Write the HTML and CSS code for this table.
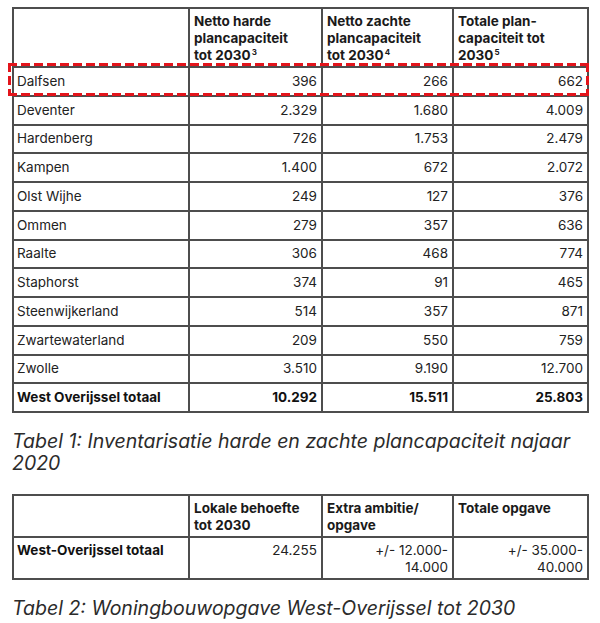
FILE: index.html
```html
<!DOCTYPE html>
<html lang="nl">
<head>
<meta charset="utf-8">
<link rel="stylesheet" href="styles.css">
</head>
<body>
<div class="page">
  <div class="table-wrap">
    <table class="data t1">
      <colgroup>
        <col class="c1"><col class="c2"><col class="c3"><col class="c4">
      </colgroup>
      <thead>
        <tr>
          <th></th>
          <th>Netto harde<br>plancapaciteit<br>tot 2030<sup>3</sup></th>
          <th>Netto zachte<br>plancapaciteit<br>tot 2030<sup>4</sup></th>
          <th>Totale plan-<br>capaciteit tot<br>2030<sup>5</sup></th>
        </tr>
      </thead>
      <tbody>
        <tr><td>Dalfsen</td><td class="n">396</td><td class="n">266</td><td class="n">662</td></tr>
        <tr><td>Deventer</td><td class="n">2.329</td><td class="n">1.680</td><td class="n">4.009</td></tr>
        <tr><td>Hardenberg</td><td class="n">726</td><td class="n">1.753</td><td class="n">2.479</td></tr>
        <tr><td>Kampen</td><td class="n">1.400</td><td class="n">672</td><td class="n">2.072</td></tr>
        <tr><td>Olst Wijhe</td><td class="n">249</td><td class="n">127</td><td class="n">376</td></tr>
        <tr><td>Ommen</td><td class="n">279</td><td class="n">357</td><td class="n">636</td></tr>
        <tr><td>Raalte</td><td class="n">306</td><td class="n">468</td><td class="n">774</td></tr>
        <tr><td>Staphorst</td><td class="n">374</td><td class="n">91</td><td class="n">465</td></tr>
        <tr><td>Steenwijkerland</td><td class="n">514</td><td class="n">357</td><td class="n">871</td></tr>
        <tr><td>Zwartewaterland</td><td class="n">209</td><td class="n">550</td><td class="n">759</td></tr>
        <tr><td>Zwolle</td><td class="n">3.510</td><td class="n">9.190</td><td class="n">12.700</td></tr>
        <tr class="total"><td>West Overijssel totaal</td><td class="n">10.292</td><td class="n">15.511</td><td class="n">25.803</td></tr>
      </tbody>
    </table>
    <div class="highlight"></div>
  </div>
  <p class="caption cap1">Tabel 1: Inventarisatie harde en zachte plancapaciteit najaar<br>2020</p>

  <table class="data t2">
    <colgroup>
      <col class="c1"><col class="c2"><col class="c3"><col class="c4">
    </colgroup>
    <thead>
      <tr>
        <th></th>
        <th>Lokale behoefte<br>tot 2030</th>
        <th>Extra ambitie/<br>opgave</th>
        <th>Totale opgave</th>
      </tr>
    </thead>
    <tbody>
      <tr>
        <td class="b">West-Overijssel totaal</td>
        <td class="n">24.255</td>
        <td class="n">+/- 12.000-<br>14.000</td>
        <td class="n">+/- 35.000-<br>40.000</td>
      </tr>
    </tbody>
  </table>
  <p class="caption cap2">Tabel 2: Woningbouwopgave West-Overijssel tot 2030</p>
</div>
</body>
</html>
```

FILE: styles.css
```css
* { box-sizing: border-box; }
html, body { margin: 0; padding: 0; background: #fff; }
body {
  font-family: Inter, "Noto Sans", "Liberation Sans", sans-serif;
  color: #222;
}
.page {
  padding: 7px 12px 0 12px;
  width: 600px;
}
.table-wrap { position: relative; }
table.data {
  border-collapse: collapse;
  width: 575px;
  table-layout: fixed;
  font-size: 13.5px;
}
col.c1 { width: 176px; }
col.c2 { width: 133px; }
col.c3 { width: 131px; }
col.c4 { width: 135px; }
table.data th, table.data td {
  border: 2px solid #4d4d4d;
}
table.data th {
  font-weight: 700;
  text-align: left;
  vertical-align: top;
  line-height: 17px;
  padding: 4px 4px 2px 4px;
  color: #1a1a1a;
  white-space: nowrap;
}
.t1 thead th { height: 57px; }
.t1 tbody td {
  height: 28.75px;
  padding: 0 4px 0 3px;
  line-height: 17px;
  vertical-align: middle;
}
td.n { text-align: right; }
tr.total td { font-weight: 700; color: #111; }
sup {
  font-size: 8px;
  line-height: 0;
  vertical-align: 5px;
  margin-left: 1px;
}

.highlight {
  position: absolute;
  left: -4px;
  top: 56px;
  width: 581px;
  height: 33px;
  pointer-events: none;
  background:
    repeating-linear-gradient(90deg, #e3141b 0 9px, transparent 9px 13px) left top / 100% 3px no-repeat,
    repeating-linear-gradient(90deg, #e3141b 0 9px, transparent 9px 13px) left bottom / 100% 3px no-repeat,
    repeating-linear-gradient(180deg, #e3141b 0 9px, transparent 9px 13px) left top / 3px 100% no-repeat,
    repeating-linear-gradient(180deg, #e3141b 0 9px, transparent 9px 13px) right top / 3px 100% no-repeat;
}

.caption {
  margin: 17px 0 20px 0;
  font-style: italic;
  font-size: 19.5px;
  line-height: 22px;
  color: #2b2b2b;
}
.cap2 { margin-top: 17px; }

.t2 th { height: 38px; }
.t2 td {
  height: 38px;
  vertical-align: top;
  padding: 4px 4px 2px 3px;
  line-height: 17px;
}
.t2 td.b { font-weight: 700; color: #111; }
```
